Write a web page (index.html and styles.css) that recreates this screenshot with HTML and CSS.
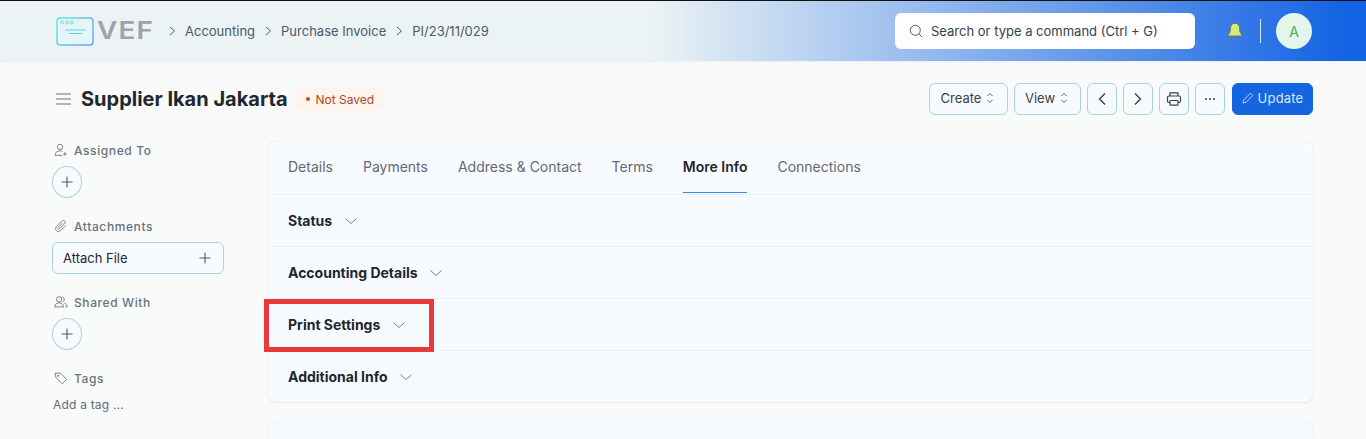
FILE: index.html
```html
<!DOCTYPE html>
<html lang="en">
<head>
<meta charset="utf-8">
<title>Supplier Ikan Jakarta</title>
<link rel="stylesheet" href="styles.css">
</head>
<body>
<header class="navbar">
  <div class="logo">
    <svg class="logo-mark" width="38" height="29" viewBox="0 0 38 29" fill="none">
      <defs><linearGradient id="lg" x1="0" y1="0" x2="1" y2="0.6"><stop offset="0" stop-color="#63e6de"/><stop offset="1" stop-color="#6aa8f2"/></linearGradient></defs>
      <rect x="1" y="1" width="36" height="27" rx="3" fill="#e4f6f8" stroke="url(#lg)" stroke-width="1.4"/>
      <circle cx="6" cy="5.500" r="1.500" stroke="#5fd8de" stroke-width="0.9"/>
      <circle cx="11" cy="5.500" r="1.500" stroke="#5fd8de" stroke-width="0.9"/>
      <circle cx="16" cy="5.500" r="1.500" stroke="#5fd8de" stroke-width="0.9"/>
      <path d="M9 13h21M13 16.500h13" stroke="#5fd0ea" stroke-width="1.200"/>
    </svg>
    <span class="logo-text">VEF</span>
  </div>
  <nav class="crumbs">
    <svg class="crumb-sep" width="16" height="16" viewBox="0 0 16 16" fill="none"><path d="M6 4l4.500 4L6 12" stroke="#4c5a67"/></svg>
    <span>Accounting</span>
    <svg class="crumb-sep" width="16" height="16" viewBox="0 0 16 16" fill="none"><path d="M6 4l4.500 4L6 12" stroke="#4c5a67"/></svg>
    <span>Purchase Invoice</span>
    <svg class="crumb-sep" width="16" height="16" viewBox="0 0 16 16" fill="none"><path d="M6 4l4.500 4L6 12" stroke="#4c5a67"/></svg>
    <span>PI/23/11/029</span>
  </nav>
  <div class="nav-right">
    <div class="search">
      <svg width="14" height="14" viewBox="0 0 14 14" fill="none"><circle cx="6.300" cy="6.300" r="5" stroke="#4c5a67"/><path d="M10 10l3 3" stroke="#4c5a67"/></svg>
      <span>Search or type a command (Ctrl + G)</span>
    </div>
    <svg class="bell" width="16" height="18" viewBox="0 0 16 18"><path d="M8 1.200c-3 0-4.500 2.400-4.500 5.100 0 3.500-1 5.200-2.500 6.700v1h14v-1c-1.500-1.500-2.500-3.200-2.500-6.700 0-2.700-1.500-5.100-4.500-5.100z" fill="#d5ea78" stroke="#6f7d4a" stroke-width="1"/><path d="M6 15.200c.4 1 1.100 1.400 2 1.400s1.600-.4 2-1.400z" fill="#6f7d4a"/></svg>
    <span class="nav-divider"></span>
    <span class="avatar">A</span>
  </div>
</header>

<main class="page">
  <div class="page-head">
    <svg class="menu" width="16" height="14" viewBox="0 0 16 14" fill="none"><path d="M0 2h15M0 7h15M0 12h15" stroke="#9aa1a8" stroke-width="1.500"/></svg>
    <h1 class="title">Supplier Ikan Jakarta</h1>
    <span class="pill"><i class="pill-dot"></i>Not Saved</span>
    <div class="actions">
      <button class="btn btn-create">Create
        <svg width="8" height="12" viewBox="0 0 8 12" fill="none"><path d="M1.500 4L4 1.500 6.500 4M1.500 8L4 10.500 6.500 8" stroke="#4c5a67" stroke-width="0.900"/></svg>
      </button>
      <button class="btn btn-view">View
        <svg width="8" height="12" viewBox="0 0 8 12" fill="none"><path d="M1.500 4L4 1.500 6.500 4M1.500 8L4 10.500 6.500 8" stroke="#4c5a67" stroke-width="0.900"/></svg>
      </button>
      <button class="btn btn-icon" aria-label="Previous"><svg width="10" height="14" viewBox="0 0 10 14" fill="none"><path d="M8 1.500L2.500 7 8 12.500" stroke="#36414c" stroke-width="1.400"/></svg></button>
      <button class="btn btn-icon" aria-label="Next"><svg width="10" height="14" viewBox="0 0 10 14" fill="none"><path d="M2 1.500L7.500 7 2 12.500" stroke="#36414c" stroke-width="1.400"/></svg></button>
      <button class="btn btn-icon" aria-label="Print"><svg width="16" height="16" viewBox="0 0 16 16" fill="none" stroke="#36414c" stroke-width="1.200"><path d="M4 5V1.800h8V5"/><rect x="1.500" y="5" width="13" height="6.500" rx="1.500"/><rect x="4" y="9.500" width="8" height="4.700" rx="0.800" fill="#f7fbfe"/></svg></button>
      <button class="btn btn-icon" aria-label="More"><svg width="12" height="4" viewBox="0 0 12 4" fill="#36414c"><circle cx="2" cy="2" r="1"/><circle cx="6" cy="2" r="1"/><circle cx="10" cy="2" r="1"/></svg></button>
      <button class="btn btn-primary"><svg width="12" height="12" viewBox="0 0 12 12" fill="none" stroke="#c7dafa" stroke-width="0.900"><path d="M1 11l.7-3L8.500 1.200 10.800 3.500 4 10.300z"/></svg>Update</button>
    </div>
  </div>

  <div class="layout">
    <aside class="side">
      <section class="side-block">
        <div class="side-label"><svg width="16" height="16" viewBox="-2 -1 18 18" fill="none" stroke="#6c7680"><circle cx="7" cy="4.500" r="3"/><path d="M1.500 14c0-3 2-5 5.500-5 1 0 1.800.2 2.500.5M1.500 14h8M12.500 10.500v4M10.500 12.500h4"/></svg>Assigned To</div>
        <button class="round-add" aria-label="Assign"><svg width="12" height="12" viewBox="0 0 12 12" fill="none" stroke="#4c5a67" stroke-width="1.100"><path d="M6 .5v11M.5 6h11"/></svg></button>
      </section>
      <section class="side-block">
        <div class="side-label"><svg width="16" height="16" viewBox="-2 -1 18 18" fill="none" stroke="#6c7680"><path d="M13.500 7.500L8 13c-1.500 1.500-3.700 1.500-5 .2s-1.300-3.500.2-5L9 2.500c1-1 2.500-1 3.300-.2s.8 2.300-.2 3.300L6.500 11c-.5.500-1.200.5-1.600.1s-.4-1.100.1-1.600L10 4.500"/></svg>Attachments</div>
        <button class="attach">Attach File<svg width="12" height="12" viewBox="0 0 12 12" fill="none" stroke="#4c5a67" stroke-width="1.100"><path d="M6 .5v11M.5 6h11"/></svg></button>
      </section>
      <section class="side-block">
        <div class="side-label"><svg width="16" height="16" viewBox="-2 -1 18 18" fill="none" stroke="#6c7680"><circle cx="6" cy="5" r="3"/><path d="M1 13.500c0-2.800 2-4.500 5-4.500s5 1.700 5 4.500zM9.500 2.200a3 3 0 0 1 .5 5.700M12 9.300c2 .5 3 2 3 4.200h-2"/></svg>Shared With</div>
        <button class="round-add" aria-label="Share"><svg width="12" height="12" viewBox="0 0 12 12" fill="none" stroke="#4c5a67" stroke-width="1.100"><path d="M6 .5v11M.5 6h11"/></svg></button>
      </section>
      <section class="side-block">
        <div class="side-label"><svg width="16" height="16" viewBox="-2 -1 18 18" fill="none" stroke="#6c7680"><path d="M1.500 2.500h6l7 7-5 5-7-7z"/><circle cx="5" cy="5.500" r="0.800"/></svg>Tags</div>
        <div class="add-tag">Add a tag ...</div>
      </section>
    </aside>

    <div class="content">
      <section class="card">
        <nav class="tabs">
          <span class="tab">Details</span>
          <span class="tab">Payments</span>
          <span class="tab">Address &amp; Contact</span>
          <span class="tab">Terms</span>
          <span class="tab tab-active">More Info</span>
          <span class="tab">Connections</span>
        </nav>
        <div class="section"><span>Status</span><svg width="14" height="8" viewBox="0 0 14 8" fill="none"><path d="M1.500 1.500L7 6.500l5.500-5" stroke="#7b838b"/></svg></div>
        <div class="section"><span>Accounting Details</span><svg width="14" height="8" viewBox="0 0 14 8" fill="none"><path d="M1.500 1.500L7 6.500l5.500-5" stroke="#7b838b"/></svg></div>
        <div class="section"><span>Print Settings</span><svg width="14" height="8" viewBox="0 0 14 8" fill="none"><path d="M1.500 1.500L7 6.500l5.500-5" stroke="#7b838b"/></svg></div>
        <div class="section"><span>Additional Info</span><svg width="14" height="8" viewBox="0 0 14 8" fill="none"><path d="M1.500 1.500L7 6.500l5.500-5" stroke="#7b838b"/></svg></div>
      </section>
      <section class="card card-next"></section>
    </div>
  </div>
</main>
<div class="highlight"></div>
</body>
</html>
```
FILE: styles.css
```css
* { box-sizing: border-box; }
html, body { height: 439px; overflow: hidden; }
body {
  margin: 0;
  background: #f9fafa;
  font-family: Inter, "Liberation Sans", sans-serif;
  color: #1f272e;
  position: relative;
}
button { font-family: inherit; margin: 0; }

.navbar {
  height: 61px;
  border-top: 1px solid #111;
  padding: 0 54px 0 56px;
  display: flex;
  align-items: center;
  background: linear-gradient(90deg, #ebf3f5 0, #ebf3f5 650px, #1463e4 1345px);
  box-shadow: 0 1px 2px rgba(25, 39, 52, .06);
}
.logo { display: flex; align-items: center; width: 108px; flex: none; }
.logo-mark { flex: none; }
.logo-text {
  font-size: 24px;
  font-weight: 600;
  color: #a0a2a4;
  margin-left: 3px;
  letter-spacing: 1px;
  line-height: 1;
  transform: scaleX(1.16);
  transform-origin: left center;
}
.crumbs { display: flex; align-items: center; font-size: 13px; color: #4c5a67; }
.crumbs span { margin: 0 5px; }
.nav-right { margin-left: auto; display: flex; align-items: center; }
.search {
  width: 300px;
  height: 36px;
  background: #fff;
  border-radius: 6px;
  display: flex;
  align-items: center;
  gap: 8px;
  padding-left: 14px;
  font-size: 13px;
  color: #36414c;
}
.bell { margin-left: 32px; }
.nav-divider { width: 1px; height: 24px; background: #dbe6f7; margin: 0 15px 0 17px; }
.avatar {
  width: 36px;
  height: 36px;
  border-radius: 50%;
  background: #e4f5e9;
  color: #48a868;
  font-size: 14px;
  display: flex;
  align-items: center;
  justify-content: center;
}

.page { padding: 0 53px 0 52px; }
.page-head { height: 76px; display: flex; align-items: center; padding-left: 4px; }
.menu { flex: none; margin-right: 9px; }
.title { margin: 0; font-size: 20px; font-weight: 700; line-height: 1; }
.pill {
  margin-left: 8px;
  height: 24px;
  padding: 0 10px;
  border-radius: 6px;
  background: #fff4ed;
  color: #a8492a;
  font-size: 12px;
  display: flex;
  align-items: center;
  gap: 6px;
}
.pill-dot { width: 4px; height: 4px; border-radius: 50%; background: #b5532f; }
.actions { margin-left: auto; display: flex; align-items: center; gap: 6px; }
.btn {
  height: 32px;
  border: 1px solid #a6d4e4;
  border-radius: 6px;
  background: #f7fbfe;
  color: #36414c;
  font-size: 13px;
  display: flex;
  align-items: center;
  justify-content: center;
  padding: 0;
}
.btn-create { width: 79px; gap: 5px; padding: 0 2px 2px 0; }
.btn-view { width: 67px; gap: 5px; padding: 0 2px 2px 0; }
.btn-icon { width: 30px; }
.btn-primary {
  width: 81px;
  margin-left: 1px;
  gap: 4px;
  padding-bottom: 2px;
  background: #1565e0;
  border-color: #1565e0;
  color: #dbe8fc;
  letter-spacing: .2px;
}

.layout { display: grid; grid-template-columns: 216px 1045px; margin-top: 4px; }
.side-label {
  display: flex;
  align-items: center;
  gap: 6px;
  height: 20px;
  padding-bottom: 2px;
  font-size: 12px;
  font-weight: 500;
  letter-spacing: .6px;
  color: #68727c;
}
.side-block + .side-block { margin-top: 19px; }
.round-add {
  display: flex;
  align-items: center;
  justify-content: center;
  width: 30px;
  height: 32px;
  margin-top: 5px;
  padding: 0;
  border: 1px solid #a6d4e4;
  border-radius: 50%;
  background: #f7fbfe;
}
.attach {
  width: 172px;
  height: 32px;
  margin-top: 5px;
  padding: 0 12px 0 10px;
  border: 1px solid #a6d4e4;
  border-radius: 6px;
  background: #f7fbfe;
  color: #1f272e;
  font-size: 13px;
  display: flex;
  align-items: center;
  justify-content: space-between;
}
.add-tag { margin: 8px 0 0 1px; font-size: 12px; color: #5f6a75; letter-spacing: .2px; }

.card {
  background: #f7fbff;
  border-radius: 8px;
  box-shadow: 0 0 1px rgba(25, 39, 52, .18), 0 1px 2px rgba(25, 39, 52, .06);
}
.tabs {
  height: 54px;
  display: flex;
  gap: 30px;
  padding-left: 20px;
  border-bottom: 1px solid #edf1f5;
}
.tab {
  height: 52px;
  display: flex;
  align-items: center;
  font-size: 14px;
  color: #5f6a75;
  border-bottom: 1px solid transparent;
}
.tab-active { color: #1f272e; font-weight: 600; border-bottom-color: #2490ef; }
.section {
  height: 52px;
  display: flex;
  align-items: center;
  gap: 11.5px;
  padding-left: 20px;
  font-size: 14px;
  font-weight: 700;
  color: #1f272e;
  border-bottom: 1px solid #edf1f5;
}
.section:last-child { height: 51px; border-bottom: 0; }
.card-next { margin-top: 20px; height: 17px; border-radius: 8px 8px 0 0; }

.highlight {
  position: absolute;
  left: 264px;
  top: 299px;
  width: 170px;
  height: 53px;
  border: 5px solid #e8393a;
}
```
